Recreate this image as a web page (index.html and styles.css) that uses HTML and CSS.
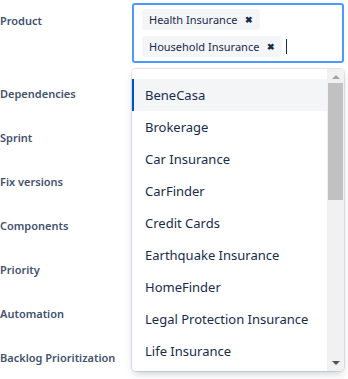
FILE: index.html
```html
<!DOCTYPE html>
<html lang="en">
<head>
    <meta charset="UTF-8">
    <title>Issue fields</title>
    <link rel="stylesheet" href="styles.css">
</head>
<body>
    <div class="fields">
        <div class="field-row product-row">
            <div class="field-label">Product</div>
            <div class="field-value">
                <div class="multi-select">
                    <span class="tag">Health Insurance <span class="tag-remove">&#x2716;</span></span>
                    <span class="tag">Household Insurance <span class="tag-remove">&#x2716;</span></span>
                    <span class="caret"></span>
                </div>

                <div class="menu">
                    <ul class="options">
                        <li class="option active">BeneCasa</li>
                        <li class="option">Brokerage</li>
                        <li class="option">Car Insurance</li>
                        <li class="option">CarFinder</li>
                        <li class="option">Credit Cards</li>
                        <li class="option">Earthquake Insurance</li>
                        <li class="option">HomeFinder</li>
                        <li class="option">Legal Protection Insurance</li>
                        <li class="option">Life Insurance</li>
                    </ul>
                    <div class="scrollbar">
                        <span class="arrow up"></span>
                        <span class="thumb"></span>
                        <span class="arrow down"></span>
                    </div>
                </div>
            </div>
        </div>
        <div class="field-row"><div class="field-label">Dependencies</div></div>
        <div class="field-row"><div class="field-label">Sprint</div></div>
        <div class="field-row"><div class="field-label">Fix versions</div></div>
        <div class="field-row"><div class="field-label">Components</div></div>
        <div class="field-row"><div class="field-label">Priority</div></div>
        <div class="field-row"><div class="field-label">Automation</div></div>
        <div class="field-row"><div class="field-label">Backlog Prioritization</div></div>
    </div>
</body>
</html>
```

FILE: styles.css
```css
body, html {
    margin: 0;
    padding: 0;
    background: #ffffff;
    font-family: "Noto Sans", "Open Sans", sans-serif;
    overflow: hidden;
}

.fields {
    display: flex;
    flex-direction: column;
}

.field-row {
    display: flex;
    align-items: center;
    height: 44px;
}

.field-label {
    width: 132px;
    flex-shrink: 0;
    font-size: 11px;
    font-weight: 600;
    color: #42526e;
    white-space: nowrap;
}

.product-row {
    height: auto;
    align-items: flex-start;
    padding-top: 3px;
    padding-bottom: 8px;
}

.product-row .field-label {
    padding-top: 10px;
}

.field-value {
    position: relative;
    width: 212px;
}

.multi-select {
    box-sizing: border-box;
    height: 60px;
    border: 2px solid #4c9aff;
    border-radius: 3px;
    padding: 4px 8px;
    display: flex;
    flex-wrap: wrap;
    align-items: center;
    gap: 6px 4px;
}

.tag {
    display: inline-flex;
    align-items: center;
    height: 21px;
    padding: 0 7px;
    background: #f4f5f7;
    border-radius: 3px;
    font-size: 11px;
    color: #172b4d;
}

.tag-remove {
    margin-left: 8px;
    font-size: 9px;
    font-weight: 700;
    color: #172b4d;
}

.caret {
    width: 1px;
    height: 15px;
    background: #172b4d;
}

.menu {
    position: absolute;
    top: 66px;
    left: 0;
    width: 212px;
    height: 302px;
    background: #ffffff;
    border-radius: 4px;
    box-shadow: 0 0 0 1px rgba(9, 30, 66, 0.1), 0 4px 8px -2px rgba(9, 30, 66, 0.25);
    display: flex;
    overflow: hidden;
    z-index: 5;
}

.options {
    flex: 1;
    list-style: none;
    margin: 0;
    padding: 10px 0 0;
}

.option {
    height: 32px;
    line-height: 32px;
    padding-left: 11px;
    font-size: 13px;
    color: #172b4d;
    border-left: 2px solid transparent;
}

.option.active {
    background: #f4f5f7;
    border-left-color: #0052cc;
}

.scrollbar {
    width: 17px;
    background: #f1f1f1;
    display: flex;
    flex-direction: column;
    align-items: center;
}

.thumb {
    width: 15px;
    height: 117px;
    background: #c1c1c1;
}

.arrow {
    width: 0;
    height: 0;
    border-left: 4px solid transparent;
    border-right: 4px solid transparent;
}

.arrow.up {
    margin: 6px 0 4px;
    border-bottom: 4px solid #a3a3a3;
}

.arrow.down {
    margin-top: auto;
    margin-bottom: 6px;
    border-top: 4px solid #505050;
}
```
